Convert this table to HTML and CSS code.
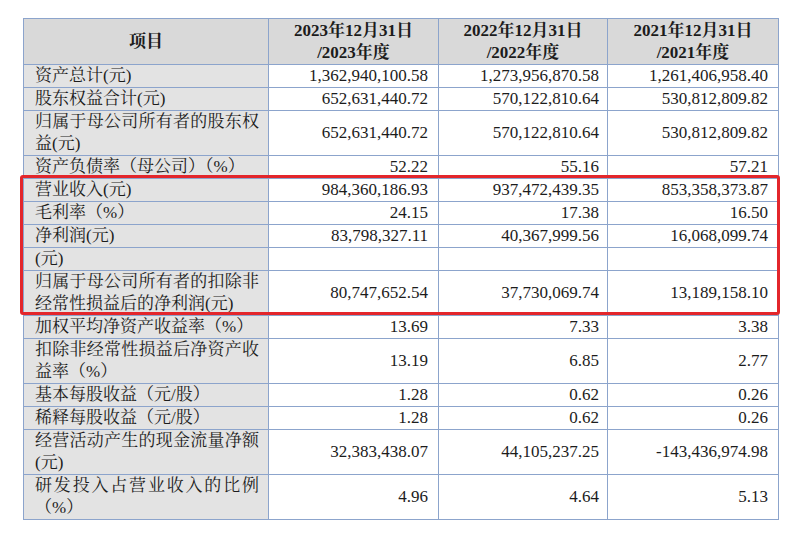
FILE: index.html
```
<!DOCTYPE html>
<html lang="zh-CN">
<head>
<meta charset="utf-8">
<link rel="stylesheet" href="styles.css">
</head>
<body>
<div class="wrap">
<table class="fin">
<colgroup><col class="c0"><col class="c1"><col class="c2"><col class="c3"></colgroup>
<thead>
<tr class="head">
<th class="lab">项目</th>
<th>2023年12月31日<br>/2023年度</th>
<th>2022年12月31日<br>/2022年度</th>
<th>2021年12月31日<br>/2021年度</th>
</tr>
</thead>
<tbody>
<tr class="s"><td class="lab">资产总计(元)</td><td>1,362,940,100.58</td><td>1,273,956,870.58</td><td>1,261,406,958.40</td></tr>
<tr class="s"><td class="lab">股东权益合计(元)</td><td>652,631,440.72</td><td>570,122,810.64</td><td>530,812,809.82</td></tr>
<tr class="d"><td class="lab">归属于母公司所有者的股东权益(元)</td><td>652,631,440.72</td><td>570,122,810.64</td><td>530,812,809.82</td></tr>
<tr class="s"><td class="lab">资产负债率（母公司）（%）</td><td>52.22</td><td>55.16</td><td>57.21</td></tr>
<tr class="s"><td class="lab">营业收入(元)</td><td>984,360,186.93</td><td>937,472,439.35</td><td>853,358,373.87</td></tr>
<tr class="s"><td class="lab">毛利率（%）</td><td>24.15</td><td>17.38</td><td>16.50</td></tr>
<tr class="s"><td class="lab">净利润(元)</td><td>83,798,327.11</td><td>40,367,999.56</td><td>16,068,099.74</td></tr>
<tr class="s"><td class="lab">(元)</td><td></td><td></td><td></td></tr>
<tr class="d"><td class="lab">归属于母公司所有者的扣除非经常性损益后的净利润(元)</td><td>80,747,652.54</td><td>37,730,069.74</td><td>13,189,158.10</td></tr>
<tr class="s"><td class="lab">加权平均净资产收益率（%）</td><td>13.69</td><td>7.33</td><td>3.38</td></tr>
<tr class="d"><td class="lab">扣除非经常性损益后净资产收益率（%）</td><td>13.19</td><td>6.85</td><td>2.77</td></tr>
<tr class="s"><td class="lab">基本每股收益（元/股）</td><td>1.28</td><td>0.62</td><td>0.26</td></tr>
<tr class="s"><td class="lab">稀释每股收益（元/股）</td><td>1.28</td><td>0.62</td><td>0.26</td></tr>
<tr class="d"><td class="lab">经营活动产生的现金流量净额(元)</td><td>32,383,438.07</td><td>44,105,237.25</td><td>-143,436,974.98</td></tr>
<tr class="d"><td class="lab">研发投入占营业收入的比例（%）</td><td>4.96</td><td>4.64</td><td>5.13</td></tr>
</tbody>
</table>
<div class="highlight"></div>
</div>
</body>
</html>
```
FILE: styles.css
```
html, body {
  margin: 0;
  padding: 0;
  background: #ffffff;
}
body {
  font-family: "Liberation Serif", "Noto Serif CJK SC", "Noto Sans CJK SC", serif;
  font-size: 17px;
  color: #1c1c1c;
}
.wrap {
  position: relative;
  width: 755px;
  margin: 18px 0 0 23px;
}
.fin {
  border-collapse: collapse;
  table-layout: fixed;
  width: 755px;
}
.c0 { width: 245px; }
.c1 { width: 170px; }
.c2 { width: 169px; }
.c3 { width: 171px; }
.fin th, .fin td {
  border: 1px solid #8ca4cc;
  padding: 0 10px 0 10px;
  line-height: 22px;
  vertical-align: middle;
  text-align: right;
  overflow: hidden;
}
.fin td:nth-child(3) { padding-right: 8px; }
.fin th {
  background: #d9d9d9;
  font-weight: bold;
  text-align: center;
  height: 45px;
  padding: 0 4px;
}
.fin td.lab {
  background: #e3e3e3;
  text-align: justify;
  padding-left: 11px;
  padding-right: 9px;
}
.fin th.lab { background: #d9d9d9; }
tr.s td { height: 22px; }
tr.d td { height: 44px; }
.highlight {
  position: absolute;
  left: -3px;
  top: 157px;
  width: 754px;
  height: 134px;
  border: 3px solid #e3262b;
  border-radius: 3px;
  pointer-events: none;
}
```
